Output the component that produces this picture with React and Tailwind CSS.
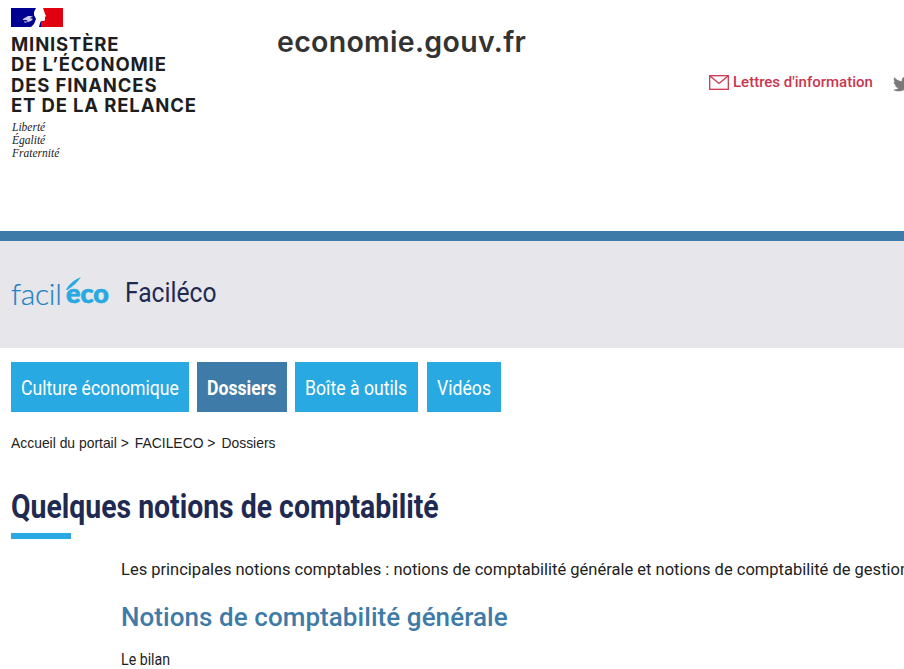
import { FaTwitter } from 'react-icons/fa';

const roboto = { fontFamily: 'Roboto, sans-serif' };
const inter = { fontFamily: 'Inter, sans-serif' };

// flag block with the marianne profile
const FlagLogo = () => (
  <svg width="52" height="19" viewBox="0 0 52 19" className="block">
    <rect width="52" height="19" fill="#000091" />
    <rect x="30" width="22" height="19" fill="#e1000f" />
    <path d="M25 0h7l1 3 1 3 1 2-1 1 0 3-1 1-3 0-1 2-1 4h-8l3-3 2-5-2-4 0-3z" fill="#fff" />
    <path d="M12 11l5-3 5 0-3 1.5 3 .5-3 1 3 0-2 2-3 1-2-1 2-1-5 0zM13 13l3 1-2 1z" fill="#fff" opacity=".8" />
  </svg>
);

const MailIcon = () => (
  <svg width="20" height="15" viewBox="0 0 20 15" fill="none" stroke="#c9364f" strokeWidth="1.3">
    <rect x="0.7" y="0.7" width="18.6" height="13.6" />
    <path d="M1 1l9 7.5L19 1" />
  </svg>
);

const FacilEcoLogo = () => (
  <div className="relative w-[98px] h-[30px] shrink-0 mt-[-1px]" style={{ fontFamily: 'Lato, sans-serif' }}>
    <span className="absolute left-[-1px] top-[-4px] text-[30px] leading-[36px] font-light text-[#1f82c4] tracking-[-0.3px] [-webkit-text-stroke:0.2px_#1f82c4]">facil</span>
    <span className="absolute left-[54px] top-[-4px] text-[27px] leading-[36px] font-black text-[#29a9e1] [-webkit-text-stroke:0.7px_#29a9e1]">eco</span>
    <svg className="absolute left-[54px] top-[-2px]" width="15" height="13" viewBox="0 0 15 13">
      <path d="M0 13C2 8 8 3 15 0 12 5 7 9 1.5 13z" fill="#29a9e1" />
    </svg>
  </div>
);

const tabs = [
  { label: 'Culture économique', w: 'w-[178px]' },
  { label: 'Dossiers', w: 'w-[90px]', active: true },
  { label: 'Boîte à outils', w: 'w-[123px]', mr: 'mr-px' },
  { label: 'Vidéos', w: 'w-[74px]' },
];

const Condensed = ({ className = '', scale = 'scale-x-[0.84]', children }) => (
  <span className={`inline-block origin-left ${scale} whitespace-nowrap ${className}`} style={roboto}>{children}</span>
);

export default function App() {
  return (
    <div className="w-[904px] h-[669px] overflow-hidden bg-white text-[#1e1e1e]">
      {/* header */}
      <header className="h-[231px] flex pl-[11px] pt-[8px]">
        <div className="w-[266px] shrink-0">
          <FlagLogo />
          <div className="mt-[7px] text-[18.5px] leading-[20.3px] font-bold text-[#1e1e1e] tracking-[0.85px] whitespace-nowrap" style={inter}>
            <div>MINISTÈRE</div>
            <div>DE L’ÉCONOMIE</div>
            <div>DES FINANCES</div>
            <div>ET DE LA RELANCE</div>
          </div>
          <div className="mt-[6px] ml-px text-[11.5px] leading-[13px] italic text-[#222]" style={{ fontFamily: '"Liberation Serif", serif' }}>
            <div>Liberté</div>
            <div>Égalité</div>
            <div>Fraternité</div>
          </div>
        </div>
        <div className="w-[432px] shrink-0 pt-[14px] text-[28.5px] leading-[40px] font-semibold text-[#333] tracking-[0.3px]" style={inter}>
          economie.gouv.fr
        </div>
        <div className="flex items-center gap-[4px] h-[20px] mt-[64px] shrink-0">
          <MailIcon />
          <span className="text-[15px] font-medium text-[#c9364f] whitespace-nowrap" style={roboto}>Lettres d'information</span>
          <FaTwitter className="ml-[16px] mt-[3px] text-[18px] text-[#7a7a7a] shrink-0" />
        </div>
      </header>

      <div className="h-[10px] bg-[#3f7ba8]" />

      {/* band */}
      <div className="h-[107px] bg-[#e6e6eb] flex items-center pl-[12px] gap-[15px]">
        <FacilEcoLogo />
        <span className="pb-[4px] text-[#1f2a52]">
          <Condensed className="text-[28px]" scale="scale-x-[0.88]">Faciléco</Condensed>
        </span>
      </div>

      {/* nav */}
      <nav className="mt-[14px] ml-[11px] flex gap-[8px]">
        {tabs.map((t) => (
          <a key={t.label} className={`${t.w} ${t.mr ?? ''} h-[50px] flex items-center pl-[10px] pt-[4px] text-white text-[21px] ${t.active ? 'bg-[#3f7ba8] font-bold' : 'bg-[#29a9e1]'}`}>
            <Condensed>{t.label}</Condensed>
          </a>
        ))}
      </nav>

      {/* breadcrumb */}
      <div className="mt-[23px] ml-[11px] flex gap-[6px] text-[13.9px] leading-[16px] text-[#222]" style={{ fontFamily: '"Liberation Sans", sans-serif' }}>
        <span>Accueil du portail &gt;</span>
        <span>FACILECO &gt;</span>
        <span>Dossiers</span>
      </div>

      <main className="ml-[11px] mt-[35px]">
        <h1 className="text-[33px] leading-[40px] font-bold text-[#1f2a52]">
          <Condensed scale="scale-x-[0.86]">Quelques notions de comptabilité</Condensed>
        </h1>
        <div className="w-[60px] h-[6px] bg-[#29a9e1] mt-[6px]" />
        <div className="ml-[110px] mt-[21px]">
          <p className="text-[16.5px] leading-[20px] whitespace-nowrap text-[#222]" style={roboto}>
            Les principales notions comptables : notions de comptabilité générale et notions de comptabilité de gestion
          </p>
          <h2 className="mt-[20px] text-[26px] leading-[34px] font-medium text-[#3f7ba8] whitespace-nowrap tracking-[0.06px]" style={roboto}>
            Notions de comptabilité générale
          </h2>
          <p className="mt-[15px] text-[16.5px] leading-[20px]">
            <Condensed scale="scale-x-[0.86]">Le bilan</Condensed>
          </p>
        </div>
      </main>
    </div>
  );
}
